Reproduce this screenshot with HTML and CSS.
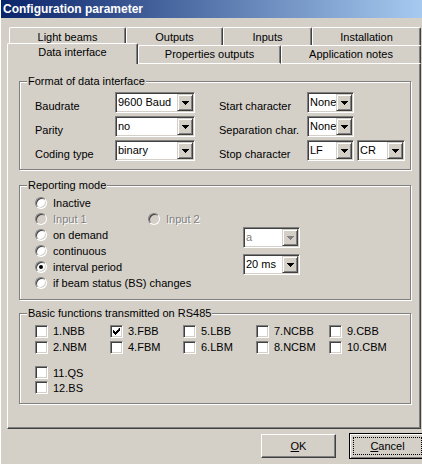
FILE: index.html
```html
<!DOCTYPE html>
<html lang="en">
<head>
  <meta charset="UTF-8" />
  <title>Configuration parameter</title>
  <link rel="stylesheet" href="styles.css">
</head>
<body>
  <div class="window">
    <div class="titlebar">Configuration parameter</div>

    <div class="tabs tabs-back">
      <div class="tab tab-light">Light beams</div>
      <div class="tab tab-outputs">Outputs</div>
      <div class="tab tab-inputs">Inputs</div>
      <div class="tab tab-install">Installation</div>
    </div>
    <div class="tabs tabs-front">
      <div class="tab tab-active tab-data">Data interface</div>
      <div class="tab tab-props">Properties outputs</div>
      <div class="tab tab-notes">Application notes</div>
    </div>

    <div class="page">
      <fieldset class="group group-format">
        <legend>Format of data interface</legend>
        <div class="format">
          <div class="format-col">
            <div class="field">
              <span class="label label-l">Baudrate</span>
              <div class="combo"><span class="combo-value">9600 Baud</span><span class="combo-btn"><svg width="7" height="4"><path d="M0 0h7v1h-1v1h-1v1h-1v1h-1v-1h-1v-1h-1v-1h-1z"/></svg></span></div>
            </div>
            <div class="field">
              <span class="label label-l">Parity</span>
              <div class="combo"><span class="combo-value">no</span><span class="combo-btn"><svg width="7" height="4"><path d="M0 0h7v1h-1v1h-1v1h-1v1h-1v-1h-1v-1h-1v-1h-1z"/></svg></span></div>
            </div>
            <div class="field">
              <span class="label label-l">Coding type</span>
              <div class="combo"><span class="combo-value">binary</span><span class="combo-btn"><svg width="7" height="4"><path d="M0 0h7v1h-1v1h-1v1h-1v1h-1v-1h-1v-1h-1v-1h-1z"/></svg></span></div>
            </div>
          </div>
          <div class="format-col">
            <div class="field">
              <span class="label label-r">Start character</span>
              <div class="combo combo-sm"><span class="combo-value">None</span><span class="combo-btn"><svg width="7" height="4"><path d="M0 0h7v1h-1v1h-1v1h-1v1h-1v-1h-1v-1h-1v-1h-1z"/></svg></span></div>
            </div>
            <div class="field">
              <span class="label label-r">Separation char.</span>
              <div class="combo combo-sm"><span class="combo-value">None</span><span class="combo-btn"><svg width="7" height="4"><path d="M0 0h7v1h-1v1h-1v1h-1v1h-1v-1h-1v-1h-1v-1h-1z"/></svg></span></div>
            </div>
            <div class="field">
              <span class="label label-r">Stop character</span>
              <div class="combo-pair">
                <div class="combo combo-sm"><span class="combo-value">LF</span><span class="combo-btn"><svg width="7" height="4"><path d="M0 0h7v1h-1v1h-1v1h-1v1h-1v-1h-1v-1h-1v-1h-1z"/></svg></span></div>
                <div class="combo combo-cr"><span class="combo-value">CR</span><span class="combo-btn"><svg width="7" height="4"><path d="M0 0h7v1h-1v1h-1v1h-1v1h-1v-1h-1v-1h-1v-1h-1z"/></svg></span></div>
              </div>
            </div>
          </div>
        </div>
      </fieldset>

      <fieldset class="group group-mode">
        <legend>Reporting mode</legend>
        <div class="mode">
          <div class="mode-options">
            <div class="option"><span class="radio"></span>Inactive</div>
            <div class="option-pair">
              <div class="option disabled"><span class="radio"></span>Input 1</div>
              <div class="option disabled"><span class="radio"></span>Input 2</div>
            </div>
            <div class="option"><span class="radio"></span>on demand</div>
            <div class="option"><span class="radio"></span>continuous</div>
            <div class="option"><span class="radio radio-on"></span>interval period</div>
            <div class="option"><span class="radio"></span>if beam status (BS) changes</div>
          </div>
          <div class="mode-combos">
            <div class="combo combo-mid combo-disabled"><span class="combo-value">a</span><span class="combo-btn"><svg width="7" height="4"><path d="M0 0h7v1h-1v1h-1v1h-1v1h-1v-1h-1v-1h-1v-1h-1z"/></svg></span></div>
            <div class="combo combo-mid"><span class="combo-value">20 ms</span><span class="combo-btn"><svg width="7" height="4"><path d="M0 0h7v1h-1v1h-1v1h-1v1h-1v-1h-1v-1h-1v-1h-1z"/></svg></span></div>
          </div>
        </div>
      </fieldset>

      <fieldset class="group group-funcs">
        <legend>Basic functions transmitted on RS485</legend>
        <div class="funcs">
          <div class="check"><span class="box"></span>1.NBB</div>
          <div class="check"><span class="box"><svg width="7" height="7"><path d="M6 0h1v3h-1v1h-1v1h-1v1h-1v1h-1v-1h-1v-1h-1v-3h1v1h1v1h1v-1h1v-1h1z"/></svg></span>3.FBB</div>
          <div class="check"><span class="box"></span>5.LBB</div>
          <div class="check"><span class="box"></span>7.NCBB</div>
          <div class="check"><span class="box"></span>9.CBB</div>
          <div class="check"><span class="box"></span>2.NBM</div>
          <div class="check"><span class="box"></span>4.FBM</div>
          <div class="check"><span class="box"></span>6.LBM</div>
          <div class="check"><span class="box"></span>8.NCBM</div>
          <div class="check"><span class="box"></span>10.CBM</div>
        </div>
        <div class="funcs funcs-extra">
          <div class="check"><span class="box"></span>11.QS</div>
          <div class="check check-tight"><span class="box"></span>12.BS</div>
        </div>
      </fieldset>
    </div>

    <div class="actions">
      <div class="btn"><span><u>O</u>K</span></div>
      <div class="btn btn-default"><div class="focus"><span><u>C</u>ancel</span></div></div>
    </div>
  </div>
</body>
</html>
```

FILE: styles.css
```css
* { box-sizing: border-box; }
html, body { margin: 0; }
body { background: #d4d0c8; font: 11px "Liberation Sans", Arial, sans-serif; color: #000; width: 422px; height: 464px; overflow: hidden; }

.window { height: 464px; border-left: 1px solid #fff; }
.titlebar { height: 18px; padding: 1px 0 0 2px; line-height: 17px; font-size: 12px; font-weight: bold; color: #fff; background: linear-gradient(to right, #0a246a, #a6caf0); white-space: nowrap; }

/* tab strip */
.tabs { display: flex; }
.tabs-back { margin: 9px 0 0 8px; height: 18px; }
.tabs-front { margin-left: 6px; height: 19px; align-items: flex-end; }
.tab { flex: none; border: 1px solid; border-color: #fff #404040 #fff #fff; border-bottom: none; border-radius: 2px 2px 0 0; box-shadow: inset -1px 0 0 #808080; background: #d4d0c8; text-align: center; line-height: 13px; white-space: nowrap; }
.tabs-back .tab { height: 18px; padding-top: 3px; }
.tabs-front .tab { height: 19px; padding-top: 2px; border-bottom: 1px solid #fff; }
.tabs-front .tab-active { height: 21px; border-bottom: none; }
.tab-light { width: 117px; }
.tab-outputs { width: 97px; }
.tab-inputs { width: 89px; }
.tab-install { width: 109px; }
.tab-data { width: 131px; }
.tab-props { width: 143px; }
.tab-notes { width: 140px; }

.page { margin-left: 6px; width: 414px; height: 365px; padding: 11px 9px 0 11px; border: 1px solid; border-color: transparent #404040 #404040 #fff; border-top: none; box-shadow: inset -1px -1px 0 #808080; }

/* group boxes */
.group { margin: 0; width: 392px; min-width: 0; border: 1px solid #808080; box-shadow: inset 1px 1px 0 #fff, 1px 1px 0 #fff; padding: 0 0 8px 7px; }
.group legend { padding: 0 1px; line-height: 13px; background: #d4d0c8; }
.group-format { padding-top: 4px; }
.group-mode { margin-top: 9px; padding-top: 3px; }
.group-funcs { margin-top: 7px; padding-top: 3px; padding-bottom: 8px; }

.format { display: flex; gap: 24px; margin-left: 8px; }
.format-col { display: flex; flex-direction: column; gap: 3px; }
.field { display: flex; align-items: flex-end; }
.label { flex: none; line-height: 13px; white-space: nowrap; }
.label-l { width: 80px; }
.label-r { width: 88px; }

/* combo boxes */
.combo { display: flex; flex: none; width: 80px; height: 21px; padding: 1px; border: 1px solid; border-color: #808080 #fff #fff #808080; box-shadow: inset 1px 1px 0 #404040, inset -1px -1px 0 #d4d0c8; background: #fff; }
.combo-sm { width: 47px; }
.combo-cr { width: 48px; }
.combo-mid { width: 57px; }
.combo-pair { display: flex; gap: 3px; }
.combo-value { flex: 1; padding-left: 1px; line-height: 17px; overflow: hidden; white-space: nowrap; }
.combo-btn { width: 16px; flex: none; display: flex; align-items: center; justify-content: center; border: 1px solid; border-color: #d4d0c8 #404040 #404040 #d4d0c8; box-shadow: inset 1px 1px 0 #fff, inset -1px -1px 0 #808080; background: #d4d0c8; }
.combo-btn svg { display: block; fill: #000; }
.combo-disabled .combo-value { color: #808080; }
.combo-disabled .combo-btn svg { fill: #808080; }

/* radios */
.mode { display: flex; margin-left: 8px; }
.mode-options { width: 208px; }
.mode-combos { display: flex; flex-direction: column; gap: 6px; padding-top: 32px; }
.option { display: flex; align-items: center; gap: 6px; height: 16px; white-space: nowrap; }
.option-pair { display: flex; }
.option-pair .option:first-child { width: 113px; }
.radio { flex: none; width: 12px; height: 12px; border-radius: 50%; border: 1px solid; border-color: #808080 #fff #fff #808080; box-shadow: inset 1px 1px 0 #404040, inset -1px -1px 0 #d4d0c8; background: #fff; display: flex; align-items: center; justify-content: center; }
.radio-on::after { content: ""; width: 4px; height: 4px; border-radius: 50%; background: #000; }
.disabled { color: #808080; text-shadow: 1px 1px 0 #fff; }
.disabled .radio { background: #d4d0c8; }

/* checkboxes */
.funcs { display: grid; grid-template-columns: 75px 73px 73px 73px 73px; grid-auto-rows: 16px; margin-left: 8px; }
.funcs-extra { grid-template-columns: 75px; grid-auto-rows: 15px; margin-top: 10px; }
.check { display: flex; align-items: center; gap: 5px; white-space: nowrap; }
.box { flex: none; width: 13px; height: 13px; border: 1px solid; border-color: #808080 #fff #fff #808080; box-shadow: inset 1px 1px 0 #404040, inset -1px -1px 0 #d4d0c8; background: #fff; display: flex; align-items: center; justify-content: center; }
.box svg { display: block; fill: #000; }

/* buttons */
.actions { display: flex; align-items: flex-start; gap: 13px; margin: 4px 0 0 260px; }
.btn { flex: none; width: 75px; height: 24px; margin-top: 1px; display: flex; align-items: center; justify-content: center; border: 1px solid; border-color: #fff #404040 #404040 #fff; box-shadow: inset -1px -1px 0 #808080; background: #d4d0c8; }
.btn-default { width: 77px; height: 26px; margin-top: 0; padding: 3px; border: 1px solid #000; box-shadow: inset 1px 1px 0 #fff, inset -1px -1px 0 #808080; }
.focus { flex: 1; align-self: stretch; display: flex; align-items: center; justify-content: center; border: 1px dotted #000; }
```
